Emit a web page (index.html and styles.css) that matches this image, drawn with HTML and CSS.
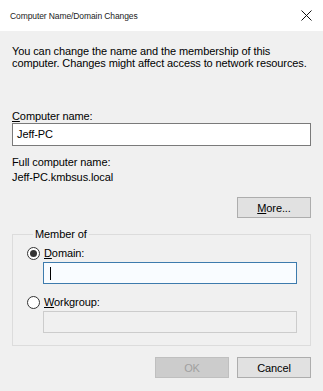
FILE: index.html
```html
<!DOCTYPE html>
<html lang="en">
<head>
  <meta charset="UTF-8" />
  <title>Computer Name/Domain Changes</title>
  <link rel="stylesheet" href="styles.css">
</head>
<body>
  <div class="dialog">
    <div class="titlebar">
      <span class="title">Computer Name/Domain Changes</span>
      <span class="close-btn">
        <svg viewBox="0 0 11 11" width="11" height="11"><path d="M0.5 0.5L10.5 10.5M10.5 0.5L0.5 10.5"/></svg>
      </span>
    </div>

    <div class="content">
      <p class="intro">You can change the name and the membership of this computer. Changes might affect access to network resources.</p>

      <label class="field-label"><u>C</u>omputer name:</label>
      <div class="textbox">Jeff-PC</div>

      <div class="fullname">
        <div>Full computer name:</div>
        <div>Jeff-PC.kmbsus.local</div>
      </div>

      <div class="more-row">
        <button class="btn"><u>M</u>ore...</button>
      </div>

      <fieldset class="group">
        <legend>Member of</legend>
        <div class="radio-row">
          <span class="radio checked"></span>
          <span><u>D</u>omain:</span>
        </div>
        <div class="textbox sub focused"><span class="caret"></span></div>
        <div class="radio-row second">
          <span class="radio"></span>
          <span><u>W</u>orkgroup:</span>
        </div>
        <div class="textbox sub disabled"></div>
      </fieldset>

      <div class="actions">
        <button class="btn" disabled>OK</button>
        <button class="btn">Cancel</button>
      </div>
    </div>
  </div>
</body>
</html>
```

FILE: styles.css
```css
* {
  box-sizing: border-box;
}
body {
  margin: 0;
  background: #f0f0f0;
  font-family: 'Liberation Sans', Arial, sans-serif;
  font-size: 11px;
  letter-spacing: -0.1px;
  color: #000;
}
.dialog {
  width: 323px;
  height: 391px;
  background: #f0f0f0;
}
.titlebar {
  height: 31px;
  background: #fff;
  display: flex;
  align-items: center;
  justify-content: space-between;
  padding: 0 11px 0 10px;
}
.title {
  font-size: 8.5px;
  letter-spacing: -0.1px;
  color: #222;
}
.close-btn {
  display: flex;
  align-items: center;
}
.close-btn svg {
  stroke: #111;
  stroke-width: 1;
  fill: none;
}
.content {
  padding: 0 12px;
}
.intro {
  margin: 14px 0 0;
  line-height: 12px;
}
.field-label {
  display: block;
  margin-top: 41px;
  line-height: 13px;
}
.textbox {
  height: 23px;
  background: #fff;
  border: 1px solid #7a7a7a;
  padding: 0 4px;
  line-height: 21px;
}
.fullname {
  margin-top: 9px;
  line-height: 15px;
}
.more-row {
  display: flex;
  justify-content: flex-end;
  margin-top: 12px;
}
.btn {
  width: 74px;
  height: 21px;
  padding: 0;
  font-family: inherit;
  font-size: 11px;
  letter-spacing: inherit;
  color: #000;
  background: #e1e1e1;
  border: 1px solid #adadad;
}
.btn:disabled {
  background: #cccccc;
  border-color: #bfbfbf;
  color: #a0a0a0;
}
.group {
  margin: 9px 0 0;
  padding: 5px 13px 12px 14px;
  border: 1px solid #dcdcdc;
}
.group legend {
  padding: 0 2px;
  margin-left: 6px;
  line-height: 14px;
}
.radio-row {
  display: flex;
  align-items: center;
  gap: 4px;
  line-height: 14px;
}
.radio-row.second {
  margin-top: 11px;
}
.radio {
  width: 13px;
  height: 13px;
  border-radius: 50%;
  border: 1px solid #333;
  background: #fff;
  display: flex;
  align-items: center;
  justify-content: center;
}
.radio.checked::after {
  content: '';
  width: 7px;
  height: 7px;
  border-radius: 50%;
  background: #333;
}
.textbox.sub {
  height: 22px;
  margin: 2px 0 0 16px;
}
.textbox.focused {
  border-color: #3d7bad;
  background: #f9fcff;
  display: flex;
  align-items: center;
  padding-left: 6px;
}
.caret {
  width: 1px;
  height: 13px;
  background: #000;
}
.textbox.disabled {
  background: #f0f0f0;
  border-color: #cccccc;
}
.actions {
  display: flex;
  justify-content: flex-end;
  gap: 8px;
  margin-top: 11px;
}
```
